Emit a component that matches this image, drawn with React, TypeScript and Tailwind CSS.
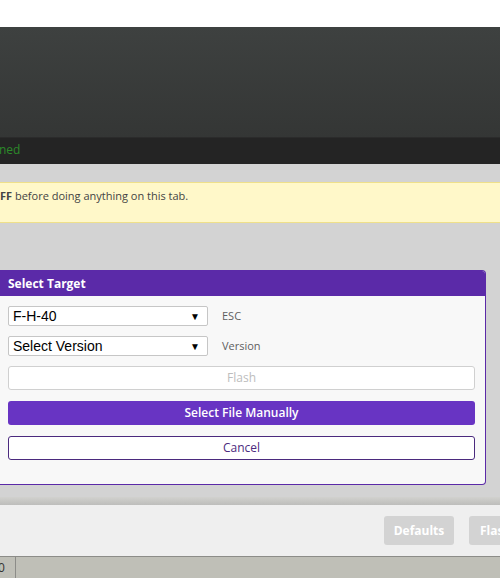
export default function App() {
  return (
    <div className="flex h-[578px] w-[500px] flex-col overflow-hidden bg-[#d3d3d3] font-['Open_Sans',sans-serif]">
      <div className="h-[27px] shrink-0 bg-white" />
      <div className="h-[110px] shrink-0 bg-gradient-to-b from-[#3e4140] to-[#343635]" />
      <div className="flex h-[27px] shrink-0 items-center border-t border-[#2b2b2b] bg-[#242424] pb-[2px] text-[12px] text-[#2c8a2a]">
        <span className="-ml-[1px]">ned</span>
      </div>

      <div className="flex flex-1 flex-col">
        <div className="mt-[18px] h-[41px] shrink-0 border-y border-[#efe08a] bg-[#fff8c9] pt-[5px] text-[11px] text-[#444]">
          <span className="font-bold">FF</span> before doing anything on this tab.
        </div>

        <div className="mt-[47px] h-[215px] w-[486px] shrink-0 overflow-hidden rounded-tr-[4px] rounded-br-[4px] border border-l-0 border-[#5b2aa8] bg-[#f8f8f8]">
          <div className="flex h-[25px] items-center bg-[#5b2aa8] pl-[8px] text-[12px] font-bold text-white">
            Select Target
          </div>
          <div className="flex flex-col px-[8px] pt-[10px]">
            <div className="flex items-center">
              <div className="flex h-[20px] w-[200px] items-center justify-between rounded-[2px] border border-[#c6c6c6] bg-white pl-[4px] pr-[7px] font-['Liberation_Sans',sans-serif] text-[14px] text-black">
                <span>F-H-40</span>
                <span className="text-[10px]">▼</span>
              </div>
              <span className="ml-[14px] text-[11px] text-[#5f5f5f]">ESC</span>
            </div>
            <div className="mt-[10px] flex items-center">
              <div className="flex h-[20px] w-[200px] items-center justify-between rounded-[2px] border border-[#c6c6c6] bg-white pl-[4px] pr-[7px] font-['Liberation_Sans',sans-serif] text-[14px] text-black">
                <span>Select Version</span>
                <span className="text-[10px]">▼</span>
              </div>
              <span className="ml-[14px] text-[11px] text-[#5f5f5f]">Version</span>
            </div>
            <div className="mt-[10px] flex h-[24px] w-[467px] items-center justify-center rounded-[3px] border border-[#d0d0d0] bg-white text-[12px] text-[#bdbdbd]">
              Flash
            </div>
            <div className="mt-[11px] flex h-[24px] w-[467px] items-center justify-center rounded-[3px] bg-[#6834c3] text-[12px] font-semibold text-white">
              Select File Manually
            </div>
            <div className="mt-[11px] flex h-[24px] w-[467px] items-center justify-center rounded-[3px] border border-[#4b2a7e] bg-white text-[12px] text-[#4b2a7e]">
              Cancel
            </div>
          </div>
        </div>
      </div>

      <div className="h-[8px] shrink-0 bg-gradient-to-b from-[#d1d1ce] to-[#bdbdbb]" />
      <div className="flex h-[51px] shrink-0 items-center gap-[15px] bg-[#efefef] pl-[384px]">
        <div className="flex h-[29px] w-[70px] shrink-0 items-center justify-center rounded-[3px] bg-[#d3d3d3] text-[12px] font-bold text-white">
          Defaults
        </div>
        <div className="flex h-[29px] shrink-0 items-center rounded-[3px] bg-[#d3d3d3] px-[11px] text-[12px] font-bold text-white">
          Flash
        </div>
      </div>
      <div className="flex h-[22px] shrink-0 items-center border-t border-[#8c8c88] bg-[#bfbfb7] text-[12px] text-[#333]">
        <span className="-ml-[2px] flex h-full w-[18px] items-center border-r border-[#8c8c88]">0</span>
      </div>
    </div>
  );
}
